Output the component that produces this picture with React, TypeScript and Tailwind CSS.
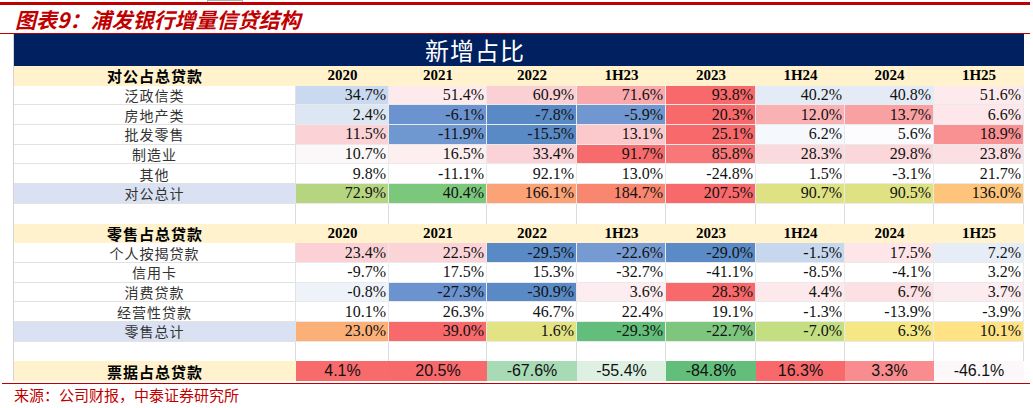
import React from "react";

const SERIF = { fontFamily: '"Liberation Serif", "Noto Sans CJK SC", serif' };
const CJK = { fontFamily: '"Noto Sans CJK SC", "Liberation Serif", serif' };
const SANS = { fontFamily: '"Liberation Sans", Arial, sans-serif' };

const cols = ["2020", "2021", "2022", "1H23", "2023", "1H24", "2024", "1H25"];
const widths = ["w-[93px]", "w-[98px]", "w-[90px]", "w-[89px]", "w-[90px]", "w-[89px]", "w-[89px]", "w-[90px]"];

type Row = { label: string; total?: boolean; cells: [string, string][] };

const corp: Row[] = [
  {
    label: "泛政信类",
    cells: [
      ["34.7%", "#c9d9ef"], ["51.4%", "#fdeaed"], ["60.9%", "#fbd0d4"], ["71.6%", "#f9a8ab"],
      ["93.8%", "#f8696b"], ["40.2%", "#e3ebf6"], ["40.8%", "#e4ebf6"], ["51.6%", "#fdeaed"],
    ],
  },
  {
    label: "房地产类",
    cells: [
      ["2.4%", "#dde6f3"], ["-6.1%", "#6a93cf"], ["-7.8%", "#5a8ac6"], ["-5.9%", "#7097d0"],
      ["20.3%", "#f8696b"], ["12.0%", "#fab1b4"], ["13.7%", "#f9a0a2"], ["6.6%", "#fde7ea"],
    ],
  },
  {
    label: "批发零售",
    cells: [
      ["11.5%", "#fbd3d6"], ["-11.9%", "#6f97d0"], ["-15.5%", "#5a8ac6"], ["13.1%", "#fbc9cc"],
      ["25.1%", "#f8696b"], ["6.2%", "#f5f8fc"], ["5.6%", "#fcfcff"], ["18.9%", "#f99092"],
    ],
  },
  {
    label: "制造业",
    cells: [
      ["10.7%", "#fcf8fa"], ["16.5%", "#fdeef0"], ["33.4%", "#fbd2d5"], ["91.7%", "#f86b6d"],
      ["85.8%", "#f87779"], ["28.3%", "#fbdadd"], ["29.8%", "#fbd7da"], ["23.8%", "#fcdfe2"],
    ],
  },
  {
    label: "其他",
    cells: [
      ["9.8%", "#ffffff"], ["-11.1%", "#ffffff"], ["92.1%", "#ffffff"], ["13.0%", "#ffffff"],
      ["-24.8%", "#ffffff"], ["1.5%", "#ffffff"], ["-3.1%", "#ffffff"], ["21.7%", "#ffffff"],
    ],
  },
  {
    label: "对公总计",
    total: true,
    cells: [
      ["72.9%", "#b5d580"], ["40.4%", "#7bc77c"], ["166.1%", "#fba276"], ["184.7%", "#f98770"],
      ["207.5%", "#f8696b"], ["90.7%", "#dfe283"], ["90.5%", "#dfe283"], ["136.0%", "#fec47c"],
    ],
  },
];

const retail: Row[] = [
  {
    label: "个人按揭贷款",
    cells: [
      ["23.4%", "#fbd1d5"], ["22.5%", "#fbd4d8"], ["-29.5%", "#5a8ac6"], ["-22.6%", "#769bd2"],
      ["-29.0%", "#5b8bc6"], ["-1.5%", "#c7d7ee"], ["17.5%", "#fde5e8"], ["7.2%", "#e6edf7"],
    ],
  },
  {
    label: "信用卡",
    cells: [
      ["-9.7%", "#ffffff"], ["17.5%", "#ffffff"], ["15.3%", "#ffffff"], ["-32.7%", "#ffffff"],
      ["-41.1%", "#ffffff"], ["-8.5%", "#ffffff"], ["-4.1%", "#ffffff"], ["3.2%", "#ffffff"],
    ],
  },
  {
    label: "消费贷款",
    cells: [
      ["-0.8%", "#eef2f9"], ["-27.3%", "#6a93cf"], ["-30.9%", "#5a8ac6"], ["3.6%", "#fdedf0"],
      ["28.3%", "#f8696b"], ["4.4%", "#fde8eb"], ["6.7%", "#fce0e3"], ["3.7%", "#fdecef"],
    ],
  },
  {
    label: "经营性贷款",
    cells: [
      ["10.1%", "#ffffff"], ["26.3%", "#ffffff"], ["46.7%", "#ffffff"], ["22.4%", "#ffffff"],
      ["19.1%", "#ffffff"], ["-1.3%", "#ffffff"], ["-13.9%", "#ffffff"], ["-3.9%", "#ffffff"],
    ],
  },
  {
    label: "零售总计",
    total: true,
    cells: [
      ["23.0%", "#fbb078"], ["39.0%", "#f8696b"], ["1.6%", "#e3e383"], ["-29.3%", "#63be7b"],
      ["-22.7%", "#7ec67d"], ["-7.0%", "#c4de82"], ["6.3%", "#f5e884"], ["10.1%", "#fee283"],
    ],
  },
];

const bills: [string, string][] = [
  ["4.1%", "#f86b6d"], ["20.5%", "#f8696b"], ["-67.6%", "#a8dab5"], ["-55.4%", "#ddf0e2"],
  ["-84.8%", "#63be7b"], ["16.3%", "#f8696b"], ["3.3%", "#f98c8e"], ["-46.1%", "#fcf8fa"],
];

const HeaderRow = ({ title }: { title: string }) => (
  <div className="flex h-[19.7px] bg-[#fff2cc] text-[15px] font-bold text-black leading-none">
    <div className="w-[282px] flex items-center justify-center tracking-[1px]" style={CJK}>
      {title}
    </div>
    {cols.map((c, i) => (
      <div key={c} className={`${widths[i]} flex items-center justify-center`} style={SERIF}>
        {c}
      </div>
    ))}
  </div>
);

const DataRow = ({ row }: { row: Row }) => (
  <div className="flex h-[19.7px] leading-none">
    <div
      className={`w-[282px] flex items-center justify-center text-[14px] tracking-[1px] text-[#333] border-b border-r border-[#e2e2e2] ${
        row.total ? "bg-[#d9e1f2]" : "bg-white"
      }`}
      style={CJK}
    >
      {row.label}
    </div>
    {row.cells.map(([v, bg], i) => (
      <div
        key={i}
        className={`${widths[i]} flex items-center justify-end pr-[2px] text-[16px] text-[#111] border-b border-r border-[#eaeaea]`}
        style={{ ...SERIF, backgroundColor: bg }}
      >
        {v}
      </div>
    ))}
  </div>
);

const BlankRow = () => (
  <div className="flex h-[19.7px] bg-white">
    <div className="w-[282px] border-r border-[#dcdcdc]" />
    {cols.map((c, i) => (
      <div key={c} className={`${widths[i]} border-r border-[#dcdcdc]`} />
    ))}
  </div>
);

export default function App() {
  return (
    <div className="w-[1033px] h-[408px] bg-white overflow-hidden">
      <div className="h-[2px]">
        <div className="ml-[207px] w-[36px] h-[2px] border-x border-t border-[#b0b0b0]" />
      </div>
      <div className="h-[3px] bg-[#c00000] mr-[3px]" />
      <div
        className="h-[28px] pl-[15px] text-[21px] leading-[29px] font-bold italic text-[#c00000]"
        style={CJK}
      >
        图表9：浦发银行增量信贷结构
      </div>
      <div className="h-px bg-[#c00000] mr-[3px]" />

      <div className="ml-[13px] w-[1011px] border-l border-[#d4d4d4]">
        <div
          className="h-[32px] bg-[#002060] text-white text-[24px] leading-[32px] pl-[411px] tracking-[1px]"
          style={CJK}
        >
          新增占比
        </div>
        <HeaderRow title="对公占总贷款" />
        {corp.map((r) => (
          <DataRow key={r.label} row={r} />
        ))}
        <BlankRow />
        <HeaderRow title="零售占总贷款" />
        {retail.map((r) => (
          <DataRow key={r.label} row={r} />
        ))}
        <BlankRow />
        <div className="flex h-[19.7px] leading-none">
          <div
            className="w-[282px] flex items-center justify-center bg-[#fff2cc] text-[15px] font-bold tracking-[1px] text-black"
            style={CJK}
          >
            票据占总贷款
          </div>
          {bills.map(([v, bg], i) => (
            <div
              key={i}
              className={`${widths[i]} flex items-center justify-center text-[16px] text-[#111]`}
              style={{ ...SANS, backgroundColor: bg }}
            >
              {v}
            </div>
          ))}
        </div>
      </div>

      <div className="h-px bg-[#c00000] mt-[2px] ml-[2px] mr-[3px]" />
      <div className="pl-[14px] text-[15px] leading-[22px] text-[#c00000]" style={CJK}>
        来源：公司财报，中泰证券研究所
      </div>
    </div>
  );
}
